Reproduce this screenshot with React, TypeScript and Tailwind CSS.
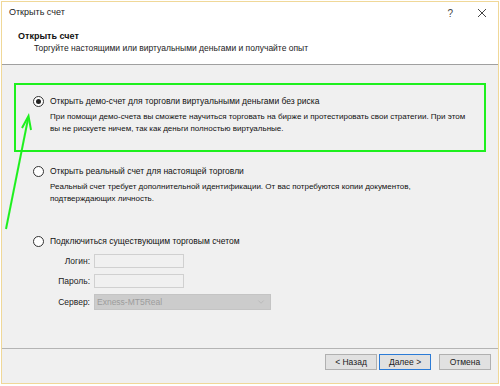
import { ChevronDown } from 'lucide-react';

function Radio({ checked }: { checked?: boolean }) {
  return (
    <span className="flex h-[11px] w-[11px] shrink-0 items-center justify-center rounded-full border border-[#333] bg-white">
      {checked && <span className="h-[5px] w-[5px] rounded-full bg-[#222]" />}
    </span>
  );
}

function Field({ label, children }: { label: string; children: React.ReactNode }) {
  return (
    <div className="flex items-center">
      <span className="w-[92px] pr-[4px] text-right">{label}</span>
      {children}
    </div>
  );
}

export default function App() {
  const font = { fontFamily: '"Liberation Sans", Arial, sans-serif' };

  return (
    <div className="relative h-[386px] w-[500px] overflow-hidden bg-white text-[8.5px] text-[#111]" style={font}>
      <div className="ml-[1px] mt-[1px] flex h-[383px] w-[498px] flex-col border border-[#f0d898] bg-[#f0f0f0]">
        {/* title bar + header */}
        <div className="h-[62px] bg-white">
          <div className="flex h-[22px] items-center justify-between pl-[7px] pr-[11px]">
            <span className="text-[9px] text-[#222]">Открыть счет</span>
            <div className="flex items-center gap-[24px] text-[#444]">
              <span className="text-[10px]">?</span>
              <svg width="10" height="10" viewBox="0 0 10 10" stroke="#444" strokeWidth="1">
                <path d="M1 1L9 9M9 1L1 9" />
              </svg>
            </div>
          </div>
          <div className="pl-[16px] pt-[6px] text-[9px] font-bold leading-[12px]">Открыть счет</div>
          <div className="pl-[32px] leading-[12px] text-[#222]">Торгуйте настоящими или виртуальными деньгами и получайте опыт</div>
        </div>
        <div className="h-px bg-[#a0a0a0]" />

        {/* body */}
        <div className="flex-1 pl-[12px] pt-[18px]">
          <div className="h-[69px] w-[472px] border-2 border-[#1ef01e] pl-[17px] pt-[10px]">
            <div className="flex items-center gap-[6px] leading-[12px]">
              <Radio checked />
              <span>Открыть демо-счет для торговли виртуальными деньгами без риска</span>
            </div>
            <div className="mt-[4px] whitespace-nowrap pl-[17px] text-[8px] leading-[12px]">
              При помощи демо-счета вы сможете научиться торговать на бирже и протестировать свои стратегии. При этом
              <br />
              вы не рискуете ничем, так как деньги полностью виртуальные.
            </div>
          </div>

          <div className="mt-[13px] pl-[19px]">
            <div className="flex items-center gap-[6px] leading-[12px]">
              <Radio />
              <span>Открыть реальный счет для настоящей торговли</span>
            </div>
            <div className="mt-[4px] whitespace-nowrap pl-[17px] text-[8px] leading-[12px]">
              Реальный счет требует дополнительной идентификации. От вас потребуются копии документов,
              <br />
              подтверждающих личность.
            </div>
          </div>

          <div className="mt-[30px] pl-[19px]">
            <div className="flex items-center gap-[6px] leading-[12px]">
              <Radio />
              <span>Подключиться существующим торговым счетом</span>
            </div>
          </div>

          <div className="-ml-[12px] mt-[7px] flex flex-col gap-[6px] text-[#222]">
            <Field label="Логин:">
              <div className="h-[14px] w-[90px] border border-[#d0d0d0] bg-[#f0f0f0]" />
            </Field>
            <Field label="Пароль:">
              <div className="h-[14px] w-[90px] border border-[#d0d0d0] bg-[#f0f0f0]" />
            </Field>
            <Field label="Сервер:">
              <div className="flex h-[16px] w-[177px] items-center justify-between border border-[#c4c4c4] bg-[#cccccc] pl-[2px] pr-[4px] text-[#9c9c9c]">
                <span>Exness-MT5Real</span>
                <ChevronDown size={10} strokeWidth={1.2} color="#a8a8a8" />
              </div>
            </Field>
          </div>
        </div>

        {/* footer */}
        <div className="h-px bg-[#b4b4b4]" />
        <div className="flex h-[34px] items-start justify-end gap-[2px] pr-[7px] pt-[5px]">
          <button className="h-[16px] w-[52px] border border-[#b0b0b0] bg-[#e1e1e1] text-[8.5px] text-[#222]">&lt; Назад</button>
          <button className="h-[16px] w-[52px] border border-[#2b7bd6] bg-[#e1e1e1] text-[8.5px] text-[#222]">Далее &gt;</button>
          <button className="ml-[6px] h-[16px] w-[52px] border border-[#b0b0b0] bg-[#e1e1e1] text-[8.5px] text-[#222]">Отмена</button>
        </div>
      </div>

      {/* annotation arrow */}
      <svg className="absolute left-0 top-0" width="60" height="240" viewBox="0 0 60 240" fill="none">
        <path d="M6 229L28 119" stroke="#1ef01e" strokeWidth="2" />
        <path d="M22 128L28.5 116L31 130" stroke="#1ef01e" strokeWidth="2" strokeLinejoin="miter" />
      </svg>
    </div>
  );
}
